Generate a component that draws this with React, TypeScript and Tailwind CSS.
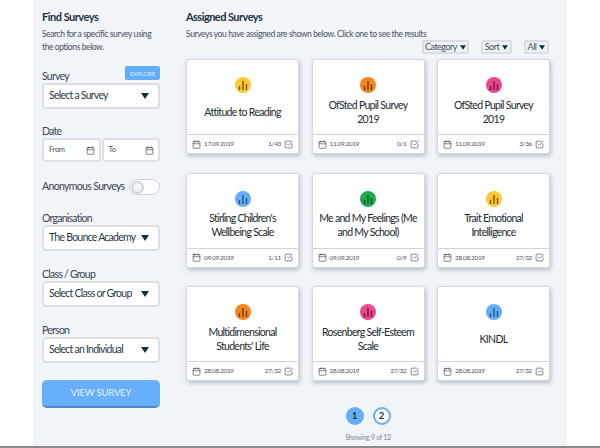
import { Calendar, SquareCheckBig } from "lucide-react";

const surveys = [
  { title: "Attitude to Reading", color: "bg-[#fcc934]", bars: "#6b4e00", date: "17.09.2019", count: "1/43" },
  { title: "OfSted Pupil Survey 2019", color: "bg-[#f4861f]", bars: "#6b3500", date: "11.09.2019", count: "0/1" },
  { title: "OfSted Pupil Survey 2019", color: "bg-[#e9478f]", bars: "#6b133c", date: "11.09.2019", count: "3/36" },
  { title: "Stirling Children's Wellbeing Scale", color: "bg-[#64aef8]", bars: "#1d4f80", date: "09.09.2019", count: "1/11" },
  { title: "Me and My Feelings (Me and My School)", color: "bg-[#22a84f]", bars: "#0b5226", date: "09.09.2019", count: "0/9" },
  { title: "Trait Emotional Intelligence", color: "bg-[#fcc934]", bars: "#6b4e00", date: "28.08.2019", count: "27/32" },
  { title: "Multidimensional Students' Life", color: "bg-[#f4861f]", bars: "#6b3500", date: "28.08.2019", count: "27/32" },
  { title: "Rosenberg Self-Esteem Scale", color: "bg-[#e9478f]", bars: "#6b133c", date: "28.08.2019", count: "27/32" },
  { title: "KINDL", color: "bg-[#64aef8]", bars: "#1d4f80", date: "28.08.2019", count: "27/32" },
];

const Caret = ({ className }: { className: string }) => (
  <svg viewBox="0 0 12 9" className={className}>
    <path d="M0 0h12L6 9z" fill="#12303f" />
  </svg>
);

const Bars = ({ color }: { color: string }) => (
  <svg viewBox="0 0 16 16" className="size-[16px]">
    <path d="M4.5 9v4M8 4v9M11.5 7v6" stroke={color} strokeWidth="1.3" fill="none" />
  </svg>
);

const Select = ({ label, value }: { label: string; value: string }) => (
  <div>
    <div className="text-[10.5px] leading-[13px] tracking-[-0.75px] text-[#3a4654]">{label}</div>
    <div className="h-[26px] flex items-center justify-between pl-[5px] pr-[9px] bg-white border-2 border-[#dcdfe3] rounded-[4px] text-[10.5px] tracking-[-0.75px] whitespace-nowrap text-[#2d3a45]">
      <span>{value}</span>
      <Caret className="w-[8px] h-[6px]" />
    </div>
  </div>
);

const DateBox = ({ label }: { label: string }) => (
  <div className="h-[24px] flex-1 flex items-center justify-between pl-[5px] pr-[4px] bg-white border-2 border-[#dcdfe3] rounded-[4px] text-[7.5px] tracking-[-0.3px] text-[#46525e]">
    <span>{label}</span>
    <Calendar size={9} strokeWidth={1.6} color="#2d3a45" />
  </div>
);

const Filter = ({ label, width }: { label: string; width: string }) => (
  <div className={`h-[14px] flex items-center justify-center gap-[3px] bg-[#eef1f5] border-2 border-[#d9dde2] rounded-[2px] text-[9px] tracking-[-0.5px] text-[#46525e] ${width}`}>
    <span>{label}</span>
    <Caret className="w-[6px] h-[5px]" />
  </div>
);

const SurveyCard = ({ s }: { s: (typeof surveys)[number] }) => (
  <div className="h-[95px] flex flex-col bg-white rounded-[3px] border border-[#d5d8dc] shadow-[1px_2px_4px_rgba(70,85,105,0.35)]">
    <div className="flex-1 flex flex-col items-center px-[6px] pt-[17px] pb-[4px] min-h-0">
      <div className={`size-[16px] shrink-0 rounded-full flex items-center justify-center ${s.color}`}>
        <Bars color={s.bars} />
      </div>
      <div className="flex-1 flex items-center text-center text-[10.5px] leading-[14px] tracking-[-0.7px] text-[#23282d]">
        <span>{s.title}</span>
      </div>
    </div>
    <div className="h-[19px] shrink-0 flex items-center justify-between px-[5px] border-t border-[#d0d4d9] text-[6.5px] tracking-[-0.35px] text-[#4a5560]">
      <div className="flex items-center gap-[3px]">
        <Calendar size={9} strokeWidth={1.6} color="#2d3a45" />
        <span>{s.date}</span>
      </div>
      <div className="flex items-center gap-[3px]">
        <span>{s.count}</span>
        <SquareCheckBig size={9} strokeWidth={1.6} color="#2d3a45" />
      </div>
    </div>
  </div>
);

export default function App() {
  return (
    <div className="w-[600px] h-[448px] overflow-hidden bg-white font-['Lato',sans-serif] border-b-2 border-[#8a8a8a]">
      <div className="ml-[33px] w-[534px] h-full flex bg-[#f1f4f9]">
        <aside className="ml-[9px] w-[118px] shrink-0 pt-[9px]">
          <h2 className="text-[11px] leading-[15px] font-bold tracking-[-0.5px] text-[#1c3140]">Find Surveys</h2>
          <p className="mt-[4px] text-[8.5px] leading-[13px] tracking-[-0.4px] text-[#46525e]">Search for a specific survey using the options below.</p>
          <div className="relative mt-[16px]">
            <div className="absolute right-0 top-[-4px] h-[14px] w-[35px] flex items-center justify-center rounded-[2px] bg-[#64aef8] text-[6px] tracking-[-0.1px] text-[#dcecfd]">EXPLORE</div>
            <Select label="Survey" value="Select a Survey" />
          </div>
          <div className="mt-[16px] text-[10.5px] leading-[13px] tracking-[-0.75px] text-[#3a4654]">Date</div>
          <div className="flex gap-[1px]">
            <DateBox label="From" />
            <DateBox label="To" />
          </div>
          <div className="mt-[17px] h-[16px] flex items-center justify-between">
            <span className="text-[10.5px] tracking-[-0.65px] whitespace-nowrap text-[#3a4654]">Anonymous Surveys</span>
            <div className="w-[31px] h-[16px] rounded-full bg-white border border-[#cfd3d7] flex items-center">
              <div className="size-[13px] ml-px rounded-full bg-[#f3f4f5] border-2 border-[#d0d4d8]" />
            </div>
          </div>
          <div className="mt-[17px]">
            <Select label="Organisation" value="The Bounce Academy" />
          </div>
          <div className="mt-[17px]">
            <Select label="Class / Group" value="Select Class or Group" />
          </div>
          <div className="mt-[17px]">
            <Select label="Person" value="Select an Individual" />
          </div>
          <button className="mt-[17px] w-full h-[28px] rounded-[5px] bg-[#67aefb] border-b-2 border-[#4a86c8] text-[9.5px] tracking-[-0.2px] text-[#e8f2fe]">VIEW SURVEY</button>
        </aside>
        <main className="ml-[26px] w-[364px] shrink-0 pt-[9px]">
          <h2 className="text-[11px] leading-[15px] font-bold tracking-[-0.55px] text-[#1c3140]">Assigned Surveys</h2>
          <p className="mt-[4px] text-[8.5px] leading-[13px] tracking-[-0.4px] text-[#46525e]">Surveys you have assigned are shown below. Click one to see the results</p>
          <div className="-mt-[1px] pr-[1px] flex justify-end gap-[12px]">
            <Filter label="Category" width="w-[47px]" />
            <Filter label="Sort" width="w-[31px]" />
            <Filter label="All" width="w-[25px]" />
          </div>
          <div className="mt-[5px] grid grid-cols-3 gap-x-[12.5px] gap-y-[18.5px]">
            {surveys.map((s, i) => (
              <SurveyCard key={i} s={s} />
            ))}
          </div>
          <div className="mt-[26px] flex justify-center gap-[9px] text-[9px] font-bold text-[#1c2833]">
            <div className="size-[18px] rounded-full bg-[#64aef8] flex items-center justify-center">1</div>
            <div className="size-[18px] rounded-full bg-white border-2 border-[#64aef8] flex items-center justify-center">2</div>
          </div>
          <div className="mt-[7px] text-center text-[7px] tracking-[-0.3px] text-[#7d8a97]">Showing 9 of 12</div>
        </main>
      </div>
    </div>
  );
}
